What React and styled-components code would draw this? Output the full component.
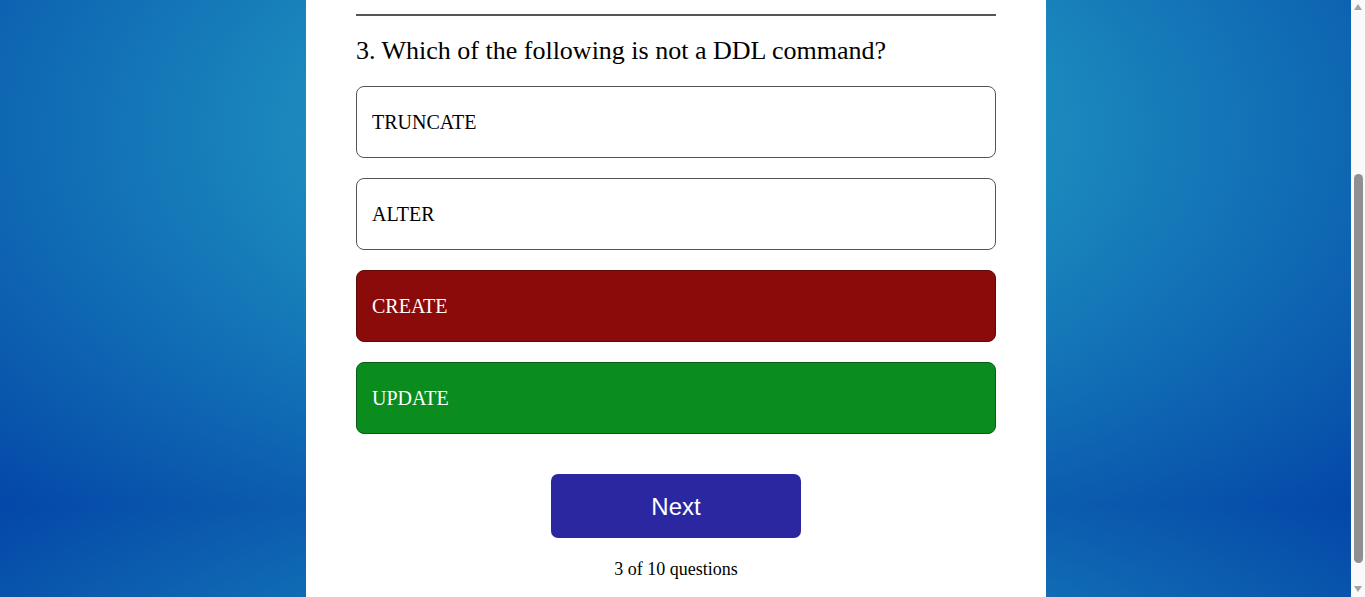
import React from 'react'
import styled, { createGlobalStyle, css } from 'styled-components'

const GlobalStyle = createGlobalStyle`
  html, body {
    height: 100%;
  }
  body {
    margin: 0;
    display: flex;
    font-family: 'Liberation Serif', 'Times New Roman', serif;
    color: #000;
    background: radial-gradient(ellipse farthest-corner at 50% 50%, #29b3cb 0%, #0447a8 100%);
    background-size: 1352px 749px;
    background-position: 0 505px;
    overflow: hidden;
  }
  #root {
    flex: 1;
    display: flex;
  }
`

const Page = styled.div`
  flex: 1;
  display: flex;
  justify-content: center;
  padding-left: 1px;
`

const Card = styled.main`
  width: 740px;
  box-sizing: border-box;
  padding: 14px 50px 18px;
  background: #fff;
`

const Divider = styled.hr`
  height: 2px;
  margin: 0 0 20px;
  border: 0;
  background: #555;
`

const Question = styled.h2`
  margin: 0 0 20px;
  font-size: 26px;
  line-height: 30px;
  font-weight: 400;
`

const Options = styled.ul`
  display: flex;
  flex-direction: column;
  gap: 20px;
  margin: 0;
  padding: 0;
  list-style: none;
`

const states = {
  idle: css`
    background: #fff;
    color: #000;
    border-color: #555;
  `,
  wrong: css`
    background: #8b0b0b;
    color: #fff;
    border-color: #5e0a0a;
  `,
  correct: css`
    background: #0b8c1f;
    color: #fff;
    border-color: #0b5c18;
  `
}

const Option = styled.li`
  display: flex;
  align-items: center;
  height: 72px;
  box-sizing: border-box;
  padding: 0 15px;
  border: 1px solid;
  border-radius: 8px;
  font-size: 20px;
  cursor: pointer;
  ${props => states[props.$state]}
`

const NextButton = styled.button`
  display: block;
  width: 250px;
  height: 64px;
  margin: 40px auto 0;
  padding: 0;
  border: none;
  border-radius: 7px;
  background: #2a27a1;
  color: #fff;
  font-family: 'Liberation Sans', Arial, sans-serif;
  font-size: 24px;
  line-height: 66px;
  cursor: pointer;
`

const Counter = styled.div`
  margin-top: 21px;
  font-size: 18px;
  line-height: 21px;
  text-align: center;
`

// the window's scrollbar, scrolled near the bottom of the page
const ScrollTrack = styled.div`
  width: 14px;
  display: flex;
  flex-direction: column;
  align-items: center;
  padding: 4px 0 5px;
  box-sizing: border-box;
  background: #f9f9f9;
`

const Arrow = styled.span`
  width: 0;
  height: 0;
  border-left: 4px solid transparent;
  border-right: 4px solid transparent;
  ${props =>
    props.$down
      ? css`
          margin-top: auto;
          border-top: 6px solid #a3a3a3;
        `
      : css`
          border-bottom: 6px solid #a3a3a3;
        `}
`

const Thumb = styled.span`
  width: 9px;
  height: 389px;
  margin-top: 164px;
  border-radius: 5px;
  background: #8f8f8f;
`

const options = [
  { label: 'TRUNCATE', state: 'idle' },
  { label: 'ALTER', state: 'idle' },
  { label: 'CREATE', state: 'wrong' },
  { label: 'UPDATE', state: 'correct' }
]

const App = () => (
  <>
    <GlobalStyle />
    <Page>
      <Card>
        <Divider />
        <Question>3. Which of the following is not a DDL command?</Question>
        <Options>
          {options.map(option => (
            <Option key={option.label} $state={option.state}>
              {option.label}
            </Option>
          ))}
        </Options>
        <NextButton>Next</NextButton>
        <Counter>3 of 10 questions</Counter>
      </Card>
    </Page>
    <ScrollTrack>
      <Arrow />
      <Thumb />
      <Arrow $down />
    </ScrollTrack>
  </>
)

export default App
